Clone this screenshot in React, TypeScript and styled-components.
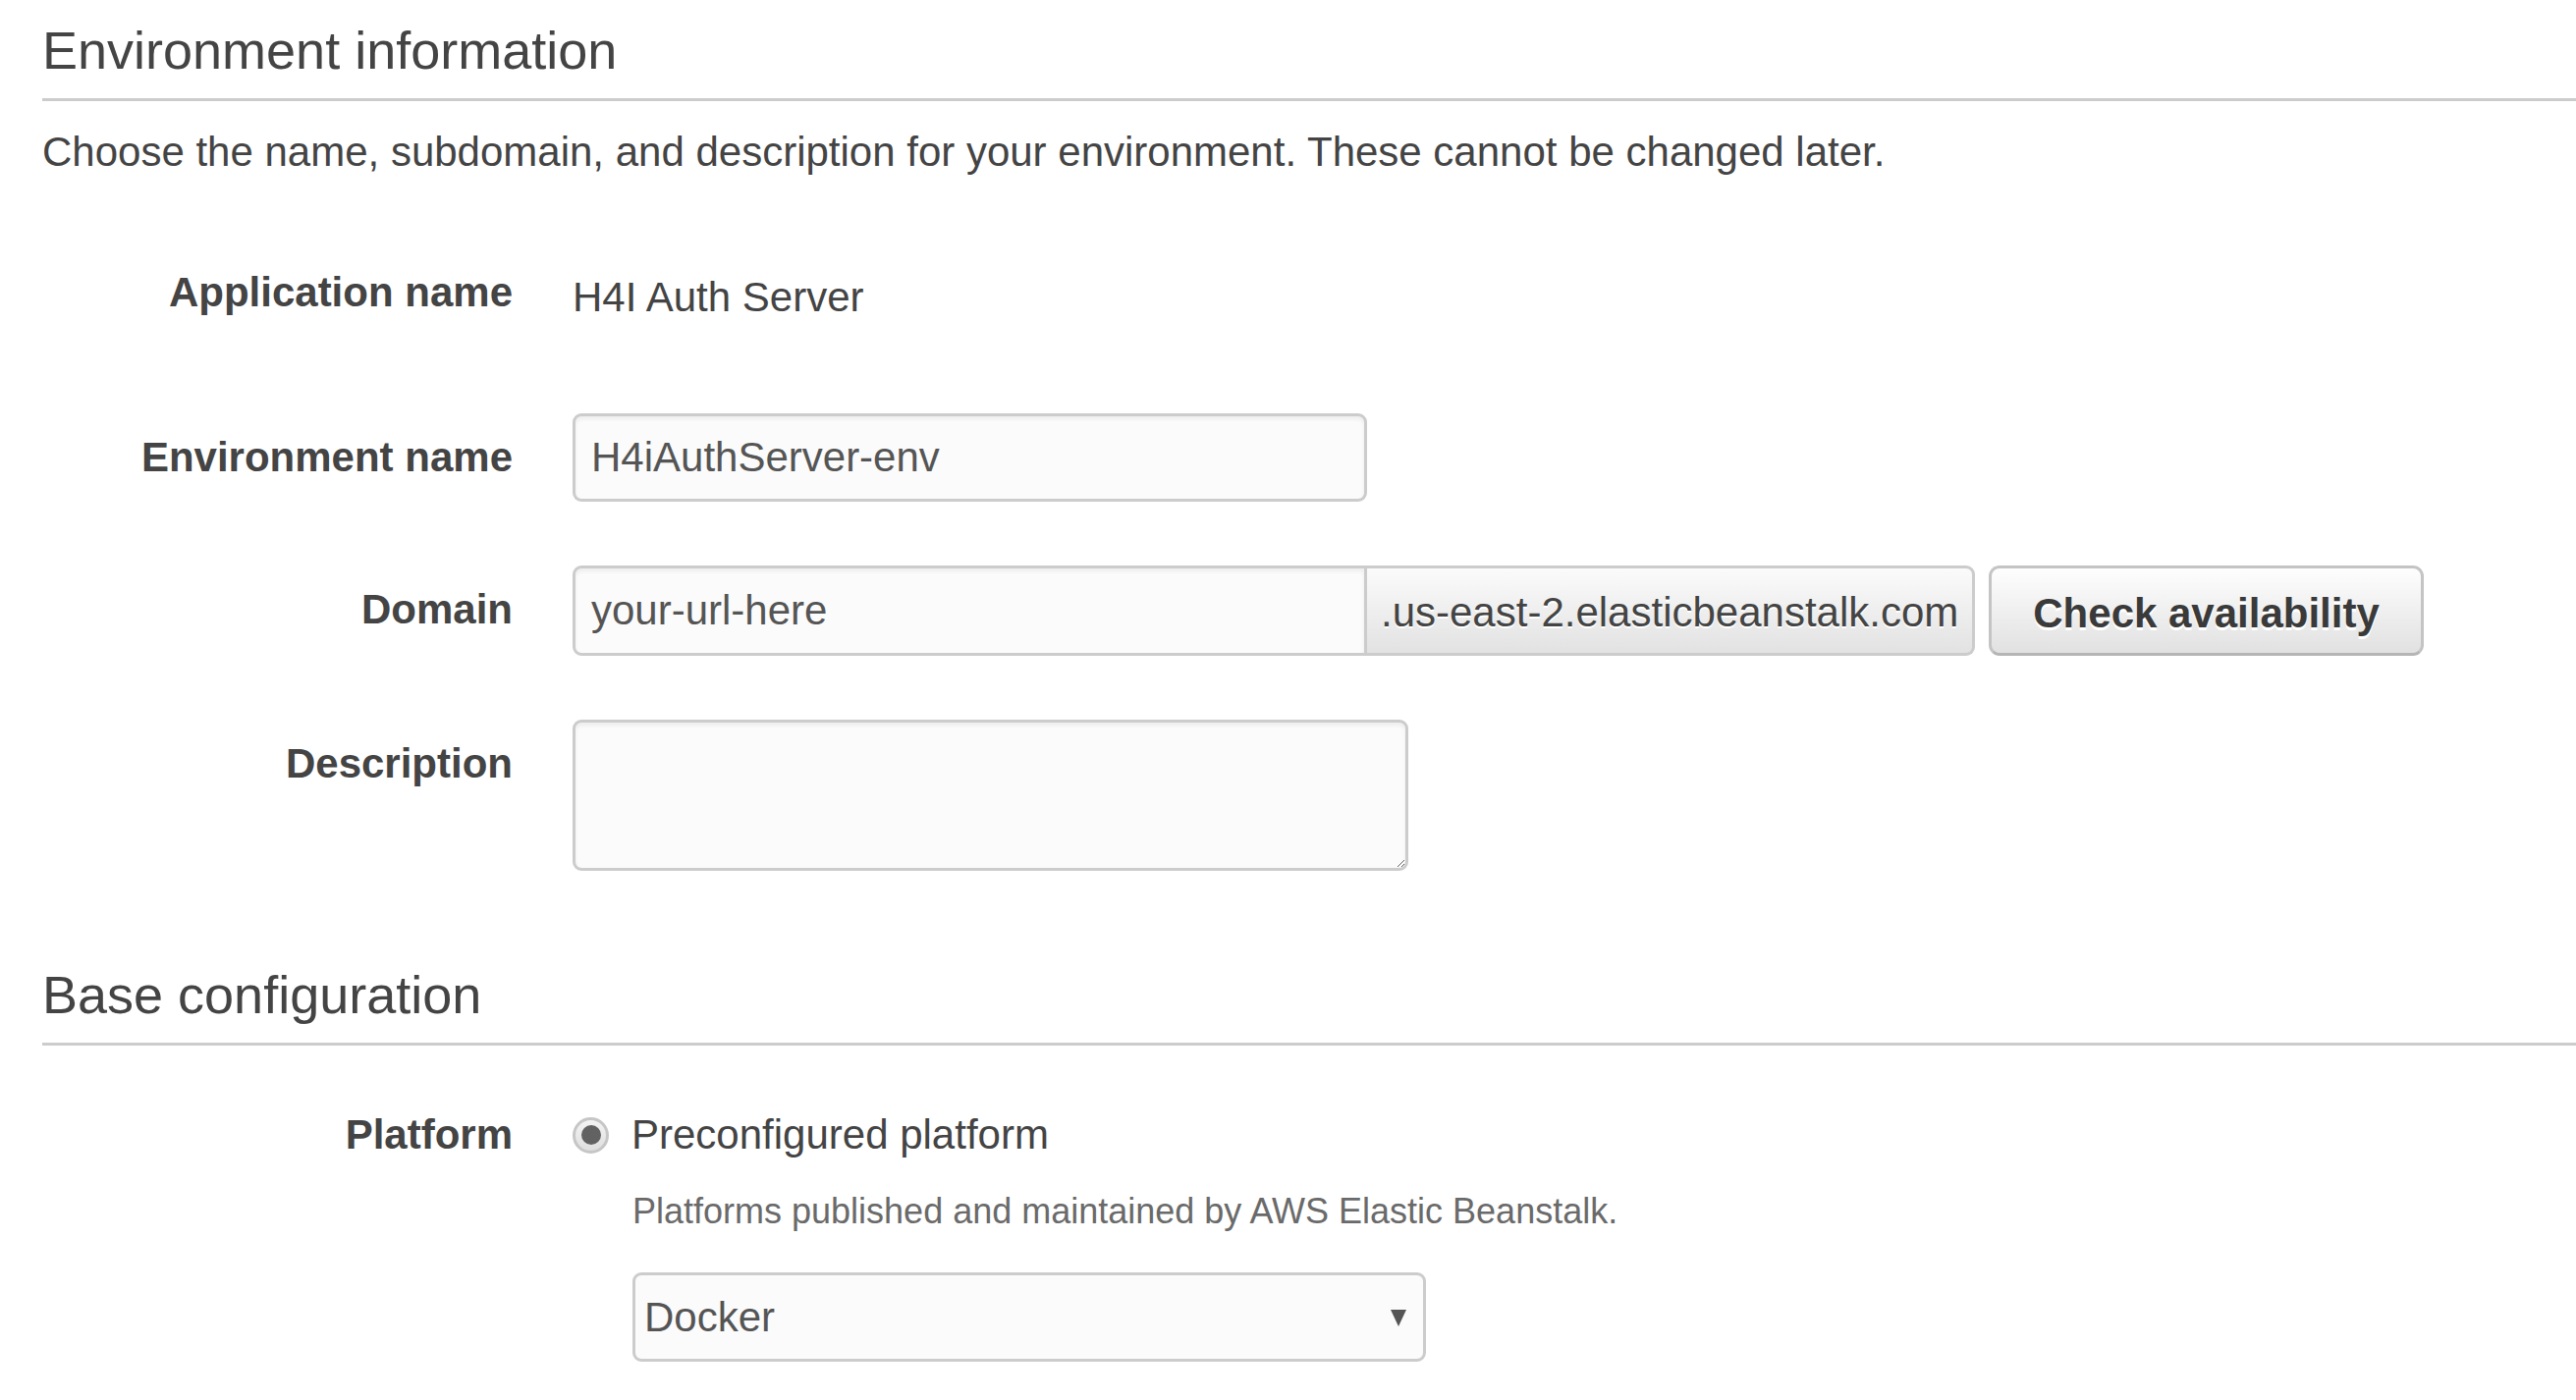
import * as React from "react";
import styled, { createGlobalStyle } from "styled-components";

const GlobalStyle = createGlobalStyle`
    html, body {
        margin: 0;
        padding: 0;
        background: #fff;
    }
    body {
        font-family: "Liberation Sans", Arial, Helvetica, sans-serif;
        color: #444;
    }
`;

const Page = styled.div`
    padding: 21px 0 60px 43px;
`;

const SectionTitle = styled.h2<{ $top?: number }>`
    margin: ${(p) => p.$top ?? 0}px 0 0;
    padding-bottom: 19px;
    border-bottom: 3px solid #ccc;
    font-size: 54px;
    line-height: 60px;
    font-weight: normal;
    color: #444;
`;

const Intro = styled.p`
    margin: 22px 0 0;
    font-size: 42px;
    line-height: 60px;
`;

const Form = styled.div<{ $top: number }>`
    display: flex;
    flex-direction: column;
    gap: 65px;
    margin-top: ${(p) => p.$top}px;
`;

const Row = styled.div<{ $minHeight?: number }>`
    display: flex;
    align-items: flex-start;
    min-height: ${(p) => (p.$minHeight ? `${p.$minHeight}px` : "auto")};
`;

const Label = styled.div`
    flex: 0 0 479px;
    margin-right: 61px;
    padding-top: 15px;
    text-align: right;
    font-size: 42px;
    line-height: 60px;
    font-weight: bold;
    color: #444;
`;

const StaticValue = styled.div`
    padding-top: 20px;
    font-size: 42px;
    line-height: 60px;
    color: #444;
`;

const fieldBase = `
    box-sizing: border-box;
    border: 3px solid #ccc;
    border-radius: 9px;
    background: #fbfbfb;
    box-shadow: inset 0 3px 4px rgba(0, 0, 0, 0.06);
    font-family: "Liberation Sans", Arial, Helvetica, sans-serif;
    font-size: 42px;
    color: #555;
    outline: none;
`;

const TextInput = styled.input<{ $grouped?: boolean }>`
    ${fieldBase}
    display: block;
    width: 809px;
    height: ${(p) => (p.$grouped ? 92 : 90)}px;
    padding: 0 16px;
    border-top-right-radius: ${(p) => (p.$grouped ? 0 : 9)}px;
    border-bottom-right-radius: ${(p) => (p.$grouped ? 0 : 9)}px;
    &::placeholder {
        color: #555;
        opacity: 1;
    }
`;

const InputGroup = styled.div`
    display: flex;
    align-items: stretch;
`;

const Addon = styled.div`
    box-sizing: border-box;
    display: flex;
    align-items: center;
    height: 92px;
    padding: 4px 14px 0;
    border: 3px solid #ccc;
    border-left: none;
    border-radius: 0 9px 9px 0;
    background: linear-gradient(#fbfbfb, #e2e2e2);
    font-size: 42px;
    color: #444;
    text-shadow: 0 2px 0 #fff;
    white-space: nowrap;
`;

const Button = styled.button`
    box-sizing: border-box;
    height: 92px;
    margin-left: 14px;
    padding: 6px 42px 0;
    border: 3px solid #c4c4c4;
    border-bottom-color: #b5b5b5;
    border-radius: 11px;
    background: linear-gradient(#fefefe, #e1e1e1);
    font-family: "Liberation Sans", Arial, Helvetica, sans-serif;
    font-size: 42px;
    font-weight: bold;
    color: #3a3a3a;
    text-shadow: 0 3px 0 #fff;
    white-space: nowrap;
    cursor: pointer;
`;

const TextArea = styled.textarea`
    ${fieldBase}
    display: block;
    width: 851px;
    height: 154px;
    padding: 12px 16px;
    resize: both;
`;

const Options = styled.div`
    display: flex;
    flex-direction: column;
    padding-top: 15px;
`;

const RadioLine = styled.label`
    display: flex;
    align-items: center;
    gap: 23px;
    height: 60px;
    font-size: 42px;
    color: #444;
`;

const RadioCircle = styled.span<{ $checked: boolean }>`
    box-sizing: border-box;
    display: flex;
    align-items: center;
    justify-content: center;
    width: 37px;
    height: 37px;
    border: 3px solid #c6c6c6;
    border-radius: 50%;
    background: linear-gradient(#f4f4f4, #dedede);
    &::after {
        content: "";
        display: ${(p) => (p.$checked ? "block" : "none")};
        width: 20px;
        height: 20px;
        border-radius: 50%;
        background: #626262;
    }
`;

const HelpText = styled.div`
    margin: 22px 0 0 61px;
    font-size: 36px;
    line-height: 52px;
    color: #6a6a6a;
`;

const SelectBox = styled.div`
    position: relative;
    width: 808px;
    margin: 36px 0 0 61px;
`;

const Select = styled.select`
    ${fieldBase}
    appearance: none;
    display: block;
    width: 100%;
    height: 91px;
    padding: 0 50px 0 9px;
    box-shadow: none;
`;

const SelectArrow = styled.svg`
    position: absolute;
    top: 38px;
    right: 20px;
    pointer-events: none;
`;

const App = () => {
    const [platform, setPlatform] = React.useState("Docker");

    return (
        <Page>
            <GlobalStyle />
            <SectionTitle>Environment information</SectionTitle>
            <Intro>Choose the name, subdomain, and description for your environment. These cannot be changed later.</Intro>
            <Form $top={68}>
                <Row $minHeight={103}>
                    <Label>Application name</Label>
                    <StaticValue>H4I Auth Server</StaticValue>
                </Row>
                <Row>
                    <Label>Environment name</Label>
                    <TextInput defaultValue="H4iAuthServer-env" />
                </Row>
                <Row>
                    <Label>Domain</Label>
                    <InputGroup>
                        <TextInput $grouped placeholder="your-url-here" />
                        <Addon>.us-east-2.elasticbeanstalk.com</Addon>
                    </InputGroup>
                    <Button type="button">Check availability</Button>
                </Row>
                <Row>
                    <Label>Description</Label>
                    <TextArea />
                </Row>
            </Form>
            <SectionTitle $top={96}>Base configuration</SectionTitle>
            <Form $top={46}>
                <Row>
                    <Label>Platform</Label>
                    <Options>
                        <RadioLine>
                            <RadioCircle $checked />
                            Preconfigured platform
                        </RadioLine>
                        <HelpText>Platforms published and maintained by AWS Elastic Beanstalk.</HelpText>
                        <SelectBox>
                            <Select value={platform} onChange={(e) => setPlatform(e.target.value)}>
                                <option>Docker</option>
                                <option>Node.js</option>
                                <option>Python</option>
                            </Select>
                            <SelectArrow width="16" height="17" viewBox="0 0 16 17">
                                <path d="M0 0 H16 L8 17 Z" fill="#555" />
                            </SelectArrow>
                        </SelectBox>
                    </Options>
                </Row>
            </Form>
        </Page>
    );
};

export default App;
